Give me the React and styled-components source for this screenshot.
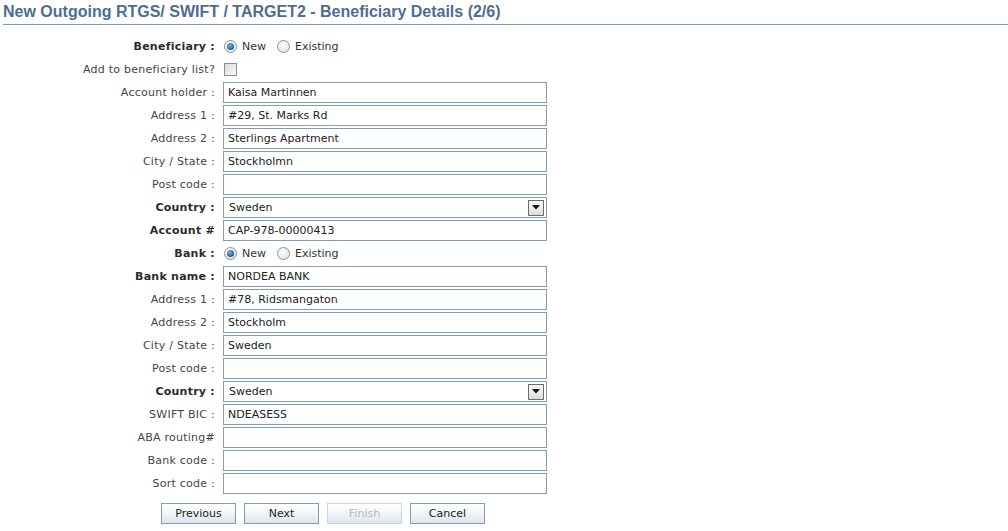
import React from "react";
import styled, { createGlobalStyle } from "styled-components";

const GlobalStyle = createGlobalStyle`
  body {
    margin: 0;
    background: #fff;
    font-family: Verdana, "DejaVu Sans", sans-serif;
    font-size: 11px;
    color: #333;
  }
`;

const Page = styled.div`
  padding: 0 0 0 3px;
`;

const Title = styled.h1`
  margin: 0;
  height: 24px;
  line-height: 24px;
  font-family: Arial, "Liberation Sans", sans-serif;
  font-size: 16px;
  font-weight: bold;
  color: #4e6d90;
  border-bottom: 1px solid #7d9ab6;
`;

const Form = styled.div`
  display: grid;
  grid-template-columns: 212px 324px;
  grid-auto-rows: 23px;
  column-gap: 8px;
  align-items: center;
  margin-top: 10px;
`;

const Label = styled.label`
  text-align: right;
  white-space: nowrap;
  letter-spacing: 0.25px;
  font-weight: ${(p) => (p.$bold ? "bold" : "normal")};
  color: ${(p) => (p.$bold ? "#2b2b2b" : "#444")};
`;

const Field = styled.div`
  display: flex;
  align-items: center;
  height: 21px;
`;

const TextInput = styled.input`
  box-sizing: border-box;
  width: 324px;
  height: 21px;
  border: 1px solid #7f9db9;
  padding: 0 4px;
  font-family: Verdana, "DejaVu Sans", sans-serif;
  font-size: 11px;
  color: #222;
  outline: none;
`;

const Select = styled.div`
  box-sizing: border-box;
  width: 324px;
  height: 21px;
  border: 1px solid #7f9db9;
  padding: 0 2px 0 5px;
  display: flex;
  align-items: center;
  justify-content: space-between;
  color: #222;
`;

const DropBtn = styled.span`
  box-sizing: border-box;
  width: 16px;
  height: 16px;
  border: 1px solid #6b6b6b;
  background: linear-gradient(#fbfbfb, #dcdcdc);
  display: flex;
  align-items: center;
  justify-content: center;
`;

const Radio = styled.span`
  box-sizing: border-box;
  width: 13px;
  height: 13px;
  border-radius: 50%;
  border: 1px solid #8e8f8f;
  background: radial-gradient(circle at 40% 35%, #ffffff, #dcdcdc);
  margin: 0 5px 0 1px;
  display: flex;
  align-items: center;
  justify-content: center;
  &::after {
    content: "";
    display: ${(p) => (p.$checked ? "block" : "none")};
    width: 7px;
    height: 7px;
    border-radius: 50%;
    background: radial-gradient(circle at 40% 35%, #6fb6e8, #1b5e9c 70%, #163e66);
  }
`;

const Option = styled.span`
  display: flex;
  align-items: center;
  margin-right: 10px;
  color: #333;
`;

const Checkbox = styled.span`
  box-sizing: border-box;
  width: 13px;
  height: 13px;
  margin-left: 1px;
  border: 1px solid #8e8f8f;
  background: linear-gradient(135deg, #dcdcdc, #fafafa);
`;

const Buttons = styled.div`
  display: flex;
  gap: 8px;
  margin: 8px 0 0 158px;
`;

const Button = styled.button`
  box-sizing: border-box;
  width: 75px;
  height: 21px;
  border: 1px solid ${(p) => (p.disabled ? "#c9d5e1" : "#7f9db9")};
  background: linear-gradient(#ffffff, #f3f5f8 45%, #dfe5ec);
  font-family: Verdana, "DejaVu Sans", sans-serif;
  font-size: 11px;
  color: ${(p) => (p.disabled ? "#b3b8be" : "#222")};
  padding: 0;
`;

const Choice = ({ checked }) => (
  <Field>
    <Option>
      <Radio $checked={checked} />
      New
    </Option>
    <Option>
      <Radio />
      Existing
    </Option>
  </Field>
);

const Dropdown = ({ value }) => (
  <Field>
    <Select>
      {value}
      <DropBtn>
        <svg width="8" height="5" viewBox="0 0 8 5">
          <path d="M0 0h8L4 4.5z" fill="#111" />
        </svg>
      </DropBtn>
    </Select>
  </Field>
);

const rows = [
  { label: "Beneficiary :", bold: true, type: "radio" },
  { label: "Add to beneficiary list?", type: "check" },
  { label: "Account holder :", value: "Kaisa Martinnen" },
  { label: "Address 1 :", value: "#29, St. Marks Rd" },
  { label: "Address 2 :", value: "Sterlings Apartment" },
  { label: "City / State :", value: "Stockholmn" },
  { label: "Post code :", value: "" },
  { label: "Country :", bold: true, type: "select", value: "Sweden" },
  { label: "Account #", bold: true, value: "CAP-978-00000413" },
  { label: "Bank :", bold: true, type: "radio" },
  { label: "Bank name :", bold: true, value: "NORDEA BANK" },
  { label: "Address 1 :", value: "#78, Ridsmangaton" },
  { label: "Address 2 :", value: "Stockholm" },
  { label: "City / State :", value: "Sweden" },
  { label: "Post code :", value: "" },
  { label: "Country :", bold: true, type: "select", value: "Sweden" },
  { label: "SWIFT BIC :", value: "NDEASESS" },
  { label: "ABA routing#", value: "" },
  { label: "Bank code :", value: "" },
  { label: "Sort code :", value: "" },
];

const App = () => {
  return (
    <Page>
      <GlobalStyle />
      <Title>New Outgoing RTGS/ SWIFT / TARGET2 - Beneficiary Details (2/6)</Title>
      <Form>
        {rows.map((r, i) => (
          <React.Fragment key={i}>
            <Label $bold={r.bold}>{r.label}</Label>
            {r.type === "radio" ? (
              <Choice checked />
            ) : r.type === "check" ? (
              <Field>
                <Checkbox />
              </Field>
            ) : r.type === "select" ? (
              <Dropdown value={r.value} />
            ) : (
              <Field>
                <TextInput defaultValue={r.value} />
              </Field>
            )}
          </React.Fragment>
        ))}
      </Form>
      <Buttons>
        <Button>Previous</Button>
        <Button>Next</Button>
        <Button disabled>Finish</Button>
        <Button>Cancel</Button>
      </Buttons>
    </Page>
  );
};

export default App;
